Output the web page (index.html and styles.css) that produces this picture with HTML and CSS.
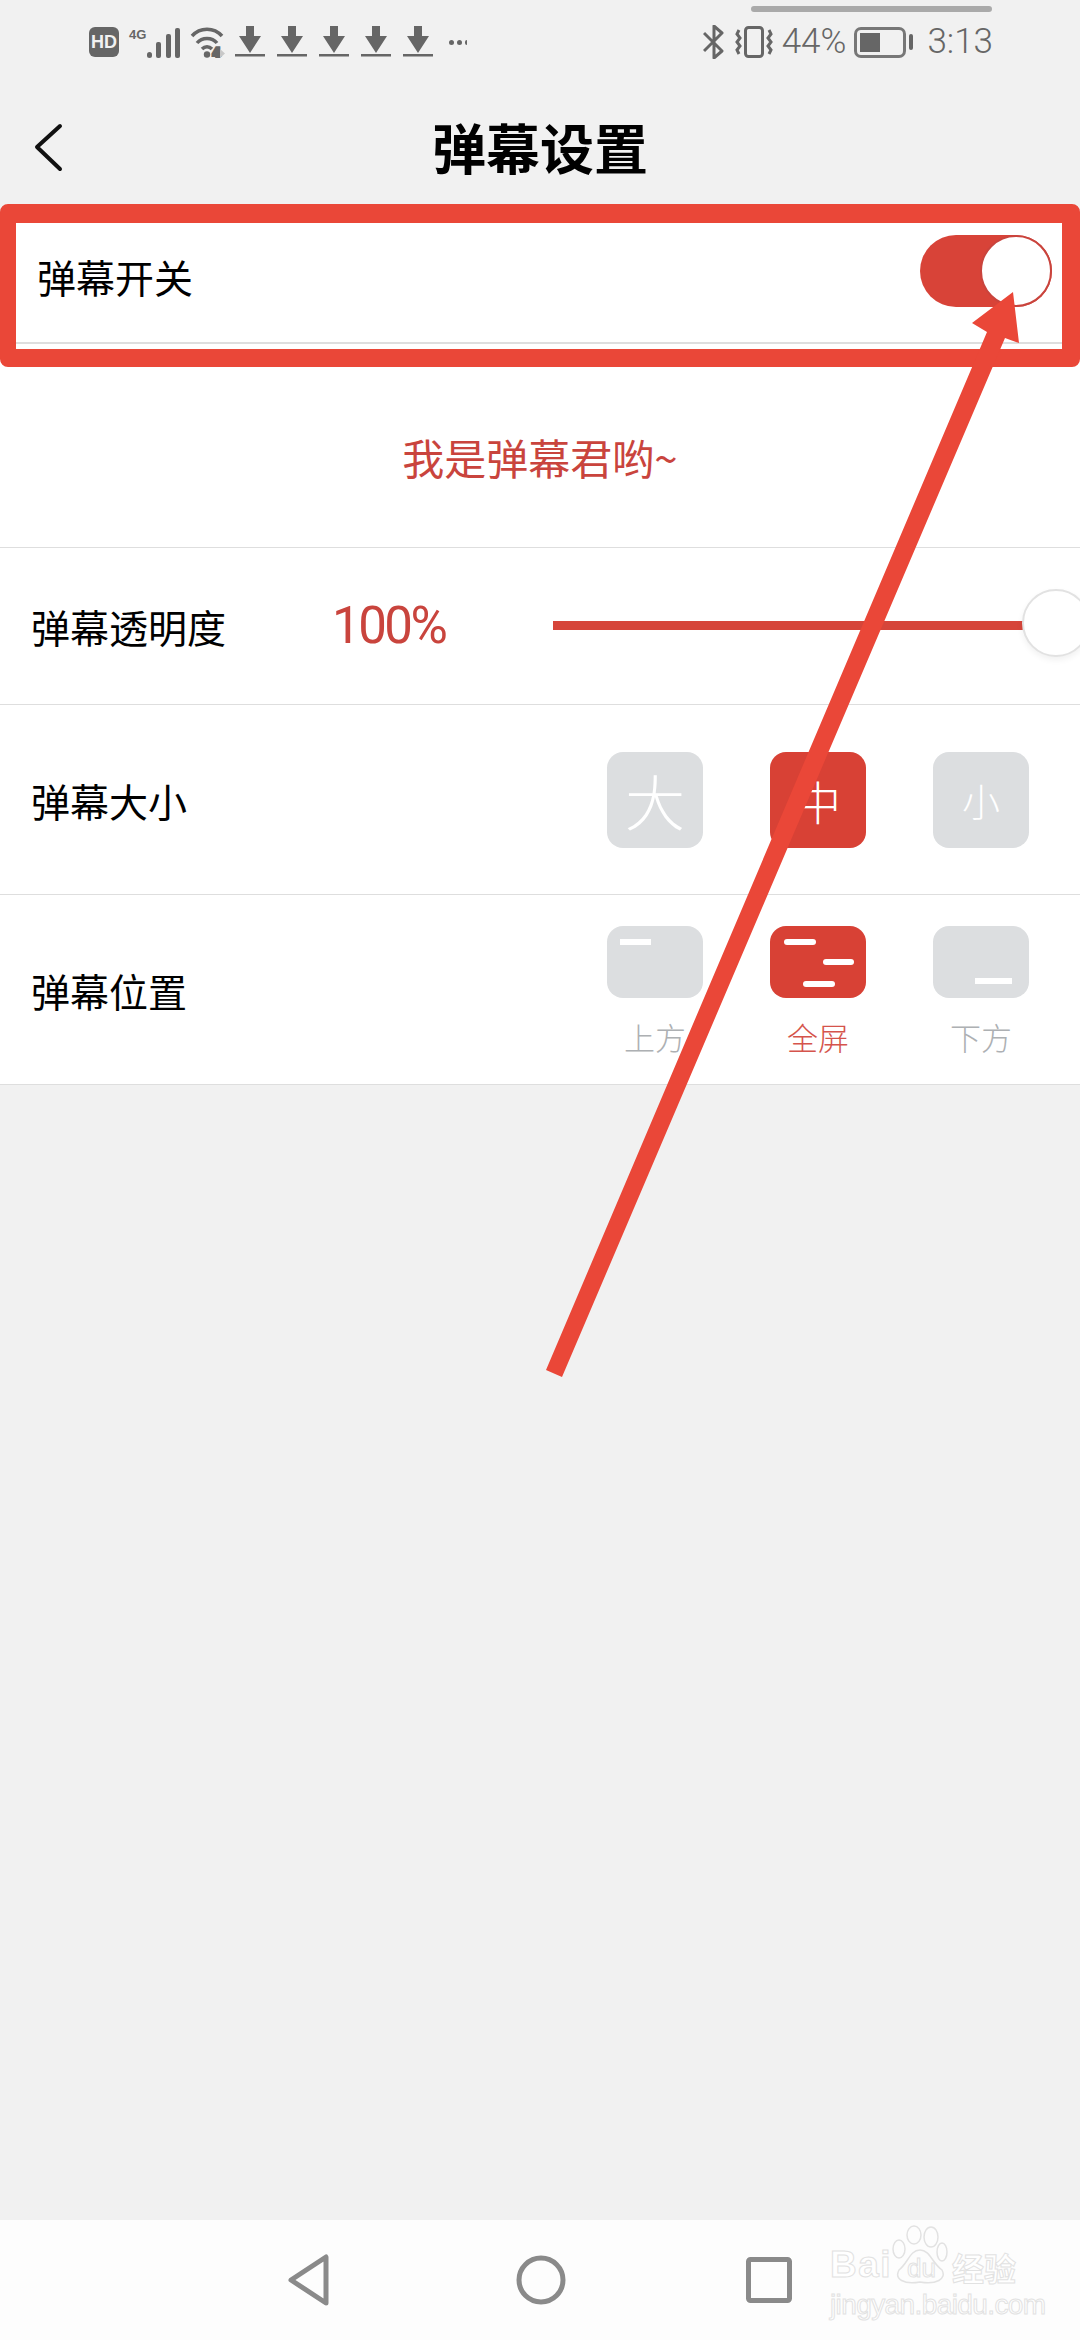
FILE: index.html
```html
<!DOCTYPE html>
<html lang="zh-CN">

<head>
    <meta charset="UTF-8">
    <meta name="viewport" content="width=device-width, initial-scale=1.0">
    <title>弹幕设置</title>
    <link rel="stylesheet" href="styles.css">
</head>

<body>
    <div class="scrollbar"></div>
    <div class="status">
        <div class="status-left">
            <span class="hd">HD</span>
            <span class="four-g">4G</span>
            <svg class="sig" width="33" height="31" viewBox="0 0 33 31">
                <rect x="0" y="25" width="5" height="6" rx="2.5" />
                <rect x="9" y="15" width="5" height="16" rx="2" />
                <rect x="19" y="7" width="5" height="24" rx="2" />
                <rect x="28" y="1" width="5" height="30" rx="2" />
            </svg>
            <svg class="wifi" width="36" height="32" viewBox="0 0 36 32" fill="none" stroke="#666" stroke-width="3.5">
                <path d="M2 10 C10 1 24 1 32 10" />
                <path d="M7 17 C12 11 22 11 27 17" />
                <path d="M12 23 C15 20 19 20 22 23" />
                <circle cx="17" cy="28.5" r="3.2" fill="#666" stroke="none" />
                <text class="wifi-num" x="23" y="31">4</text>
                <path d="M30 23 L35 27.5 L30 32 Z" fill="#c8c8c8" stroke="none" />
            </svg>
            <div class="downloads">
                <svg width="30" height="32" viewBox="0 0 30 32"><path d="M11 0h8v10h7L15 27 4 10h7z" fill="#666" /><rect y="28" width="30" height="2.5" fill="#666" /></svg>
                <svg width="30" height="32" viewBox="0 0 30 32"><path d="M11 0h8v10h7L15 27 4 10h7z" fill="#666" /><rect y="28" width="30" height="2.5" fill="#666" /></svg>
                <svg width="30" height="32" viewBox="0 0 30 32"><path d="M11 0h8v10h7L15 27 4 10h7z" fill="#666" /><rect y="28" width="30" height="2.5" fill="#666" /></svg>
                <svg width="30" height="32" viewBox="0 0 30 32"><path d="M11 0h8v10h7L15 27 4 10h7z" fill="#666" /><rect y="28" width="30" height="2.5" fill="#666" /></svg>
                <svg width="30" height="32" viewBox="0 0 30 32"><path d="M11 0h8v10h7L15 27 4 10h7z" fill="#666" /><rect y="28" width="30" height="2.5" fill="#666" /></svg>
            </div>
            <div class="dots"><i></i><i></i><i class="dot-cut"></i></div>
        </div>
        <div class="status-right">
            <svg width="21" height="34" viewBox="0 0 21 34" fill="none" stroke="#666" stroke-width="3" stroke-linejoin="round">
                <path d="M1 8 L19 26 L11 33 V1 L19 8 L1 26" />
            </svg>
            <svg class="vibrate" width="38" height="32" viewBox="0 0 38 32" fill="none" stroke="#666" stroke-width="3">
                <rect x="10.5" y="1.5" width="17" height="29" rx="3" />
                <path d="M4 4 L2 8 L5 12 L2 16 L5 20 L2 24 L4 28" />
                <path d="M34 4 L36 8 L33 12 L36 16 L33 20 L36 24 L34 28" />
            </svg>
            <span class="pct">44%</span>
            <div class="battery">
                <div class="battery-body"><div class="battery-fill"></div></div>
                <div class="battery-tip"></div>
            </div>
            <span class="time">3:13</span>
        </div>
    </div>

    <div class="header">
        <svg class="back" width="30" height="50" viewBox="0 0 30 50" fill="none" stroke="#111" stroke-width="4" stroke-linecap="round" stroke-linejoin="round">
            <path d="M27 3 L4 24 L27 46" />
        </svg>
        <h1>弹幕设置</h1>
    </div>

    <div class="panel">
        <div class="row row-switch">
            <span class="label label-switch">弹幕开关</span>
            <div class="toggle"><div class="knob"></div></div>
        </div>
        <div class="row-danmu">我是弹幕君哟~</div>
        <div class="row row-alpha">
            <span class="label">弹幕透明度</span>
            <span class="percent">100%</span>
            <div class="slider"><div class="slider-knob"></div></div>
        </div>
        <div class="row row-size">
            <span class="label">弹幕大小</span>
            <div class="options">
                <div class="opt big">大</div>
                <div class="opt mid on">中</div>
                <div class="opt small">小</div>
            </div>
        </div>
        <div class="row row-pos">
            <span class="label">弹幕位置</span>
            <div class="options">
                <div class="pos">
                    <div class="pos-box"><i class="bar b-top"></i></div>
                    <span>上方</span>
                </div>
                <div class="pos on">
                    <div class="pos-box"><i class="bar b-a"></i><i class="bar b-b"></i><i class="bar b-c"></i></div>
                    <span>全屏</span>
                </div>
                <div class="pos">
                    <div class="pos-box"><i class="bar b-bottom"></i></div>
                    <span>下方</span>
                </div>
            </div>
        </div>
    </div>

    <div class="spacer"></div>

    <div class="navbar">
        <svg class="nav-back" width="44" height="52" viewBox="0 0 44 52" fill="none" stroke="#8a8a8a" stroke-width="5" stroke-linejoin="round">
            <path d="M39 3 V49 L4 26 Z" />
        </svg>
        <svg width="50" height="50" viewBox="0 0 50 50" fill="none" stroke="#8a8a8a" stroke-width="5">
            <circle cx="25" cy="25" r="22" />
        </svg>
        <svg width="46" height="46" viewBox="0 0 46 46" fill="none" stroke="#8a8a8a" stroke-width="5" stroke-linejoin="round">
            <rect x="2.5" y="2.5" width="41" height="41" rx="2" />
        </svg>
    </div>

    <!-- red marks drawn over the screenshot -->
    <div class="mark-box"></div>
    <svg class="mark-arrow" width="1080" height="2340" viewBox="0 0 1080 2340">
        <path d="M546 1370 L562 1377 L1005 338 L1019 343 L1013 292 L972 323 L987 332 Z" fill="#ea4738" />
    </svg>

    <div class="watermark">
        <div class="wm-top">
            <span class="wm-bai">Bai</span>
            <div class="wm-paw">
                <svg width="56" height="60" viewBox="0 0 56 60" fill="none" stroke="#e2e2e2" stroke-width="1.5">
                    <ellipse cx="7" cy="24" rx="6" ry="9" />
                    <ellipse cx="22" cy="10" rx="7" ry="9" />
                    <ellipse cx="39" cy="12" rx="7" ry="10" />
                    <ellipse cx="50" cy="27" rx="5" ry="9" />
                    <path d="M28 25 C38 25 40 38 50 45 C55 54 44 60 28 57 C12 60 2 54 7 45 C16 38 18 25 28 25 Z" />
                </svg>
                <span class="wm-du">du</span>
            </div>
            <span class="wm-cn">经验</span>
        </div>
        <div class="wm-url">jingyan.baidu.com</div>
    </div>
</body>

</html>
```

FILE: styles.css
```css
body {
    margin: 0;
    width: 1080px;
    height: 2340px;
    position: relative;
    overflow: hidden;
    display: flex;
    flex-direction: column;
    background: #f1f1f1;
    font-family: "Noto Sans CJK SC", "Noto Sans", sans-serif;
    color: #000;
}

.scrollbar {
    position: absolute;
    left: 751px;
    top: 6px;
    width: 241px;
    height: 6px;
    border-radius: 3px;
    background: #aaa;
}

.status {
    height: 40px;
    flex: none;
    padding: 22px 87px 0 89px;
    display: flex;
    justify-content: space-between;
    align-items: center;
    color: #666;
}

.status-left,
.status-right {
    display: flex;
    align-items: center;
}

.hd {
    width: 30px;
    height: 30px;
    border-radius: 6px;
    background: #666;
    color: #f1f1f1;
    font: bold 18px/30px "Liberation Sans", sans-serif;
    text-align: center;
}

.four-g {
    margin-left: 10px;
    margin-bottom: 14px;
    padding-right: 1px;
    font: bold 13px/18px "Liberation Sans", sans-serif;
    white-space: nowrap;
}

.sig {
    fill: #666;
}

.wifi {
    margin-left: 10px;
}

.wifi-num {
    font: bold 12px "Liberation Sans", sans-serif;
    fill: #666;
}

.downloads {
    margin-left: 9px;
    display: flex;
    gap: 12px;
}

.dots {
    margin-left: 16px;
    display: flex;
    gap: 3px;
}

.dots i {
    width: 5px;
    height: 5px;
    border-radius: 50%;
    background: #666;
}

.dots .dot-cut {
    width: 2px;
    border-radius: 3px 0 0 3px;
}

.vibrate {
    margin-left: 11px;
}

.pct,
.time {
    font: 300 35px/42px Roboto, sans-serif;
}

.pct {
    margin-left: 9px;
}

.battery {
    margin-left: 8px;
    display: flex;
    align-items: center;
    gap: 3px;
}

.battery-body {
    width: 40px;
    height: 19px;
    border: 3px solid #777;
    border-radius: 7px;
    padding: 3px;
}

.battery-fill {
    width: 20px;
    height: 100%;
    background: #666;
}

.battery-tip {
    width: 4px;
    height: 16px;
    border-radius: 2px;
    background: #666;
}

.time {
    margin-left: 14px;
}

.header {
    height: 161px;
    flex: none;
    display: flex;
    align-items: center;
    justify-content: center;
    position: relative;
}

.header h1 {
    margin: 8px 0 0;
    font-size: 54px;
    font-weight: 700;
    line-height: 70px;
}

.back {
    position: absolute;
    left: 33px;
    top: 61px;
}

.panel {
    background: #fff;
    display: flex;
    flex-direction: column;
}

.row {
    display: flex;
    align-items: center;
    justify-content: space-between;
    padding-left: 31px;
    border-bottom: 1px solid #dedede;
    box-sizing: border-box;
}

.label {
    font-size: 39px;
    line-height: 50px;
}

.row-switch {
    height: 121px;
    padding-right: 28px;
    border-bottom-width: 2px;
}

.label-switch {
    margin-left: 6px;
    margin-bottom: 14px;
}

.toggle {
    width: 132px;
    height: 72px;
    border-radius: 36px;
    background: #d84338;
    position: relative;
    margin-bottom: 24px;
}

.knob {
    position: absolute;
    right: 0;
    top: 0;
    width: 72px;
    height: 72px;
    box-sizing: border-box;
    border: 2px solid #c9443d;
    border-radius: 50%;
    background: #fff;
}

.row-danmu {
    height: 204px;
    box-sizing: border-box;
    border-bottom: 1px solid #dedede;
    text-align: center;
    color: #c9443d;
    font-size: 42px;
    line-height: 50px;
    padding-top: 88px;
}

.row-alpha {
    height: 157px;
    justify-content: flex-start;
}

.percent {
    margin-left: 106px;
    width: 221px;
    font: 400 51px/60px Roboto, sans-serif;
    letter-spacing: -2.5px;
    color: #c9443d;
}

.slider {
    width: 471px;
    height: 9px;
    margin-bottom: 2px;
    background: #d6453a;
    position: relative;
}

.slider-knob {
    position: absolute;
    left: 469px;
    top: -32px;
    width: 68px;
    height: 68px;
    box-sizing: border-box;
    border: 2px solid #e2e2e2;
    border-radius: 50%;
    background: #fff;
    box-shadow: 0 3px 6px rgba(0, 0, 0, 0.06);
}

.row-size,
.row-pos {
    height: 190px;
}

.row-pos {
    align-items: flex-start;
    padding-top: 31px;
}

.row-pos .label {
    margin-top: 39px;
}

.options {
    display: flex;
    gap: 67px;
    padding-right: 51px;
}

.opt {
    width: 96px;
    height: 96px;
    border-radius: 16px;
    background: #dcdee0;
    color: #fff;
    display: flex;
    align-items: center;
    justify-content: center;
    font-weight: 300;
}

.big {
    font-size: 60px;
}

.mid {
    font-size: 46px;
}

.small {
    font-size: 38px;
}

.opt.on {
    background: #d84135;
}

.pos {
    width: 96px;
    display: flex;
    flex-direction: column;
    align-items: center;
    color: #adb0b3;
    font-size: 31px;
    line-height: 40px;
    font-weight: 300;
}

.pos span {
    margin-top: 19px;
}

.pos.on {
    color: #d5544c;
}

.pos-box {
    width: 96px;
    height: 72px;
    border-radius: 16px;
    background: #dcdee0;
    position: relative;
}

.pos.on .pos-box {
    background: #d84135;
}

.bar {
    position: absolute;
    height: 6px;
    background: #fff;
}

.b-top {
    left: 13px;
    top: 13px;
    width: 31px;
}

.b-a {
    left: 14px;
    top: 13px;
    width: 32px;
    border-radius: 3px;
}

.b-b {
    left: 53px;
    top: 33px;
    width: 31px;
    border-radius: 3px;
}

.b-c {
    left: 33px;
    top: 55px;
    width: 32px;
    border-radius: 3px;
}

.b-bottom {
    left: 42px;
    top: 52px;
    width: 37px;
}

.spacer {
    flex: 1;
}

.navbar {
    height: 120px;
    flex: none;
    background: #fdfdfd;
    display: flex;
    align-items: center;
    gap: 180px;
    padding-left: 287px;
}

.nav-back {
    margin-right: 5px;
}

.mark-box {
    position: absolute;
    left: 0;
    top: 204px;
    width: 1080px;
    height: 163px;
    box-sizing: border-box;
    border: solid #ea4738;
    border-width: 19px 18px 18px 16px;
    border-radius: 8px;
}

.mark-arrow {
    position: absolute;
    left: 0;
    top: 0;
}

.watermark {
    position: absolute;
    left: 830px;
    top: 2225px;
    width: 195px;
    color: #fff;
    -webkit-text-stroke: 1px #e2e2e2;
}

.wm-top {
    display: flex;
    align-items: flex-end;
    height: 60px;
}

.wm-bai {
    font: bold 37px/36px "Liberation Sans", sans-serif;
    letter-spacing: 1.5px;
    margin-bottom: 2px;
}

.wm-paw {
    width: 56px;
    height: 60px;
    position: relative;
}

.wm-paw svg {
    display: block;
}

.wm-du {
    position: absolute;
    left: 15px;
    top: 30px;
    font: 26px/26px "Liberation Sans", sans-serif;
}

.wm-cn {
    font: bold 32px/36px "Noto Sans CJK SC", sans-serif;
    margin-left: 4px;
}

.wm-url {
    margin-top: 5px;
    font: 28px/30px "Liberation Sans", sans-serif;
    letter-spacing: -0.6px;
    white-space: nowrap;
}
```
